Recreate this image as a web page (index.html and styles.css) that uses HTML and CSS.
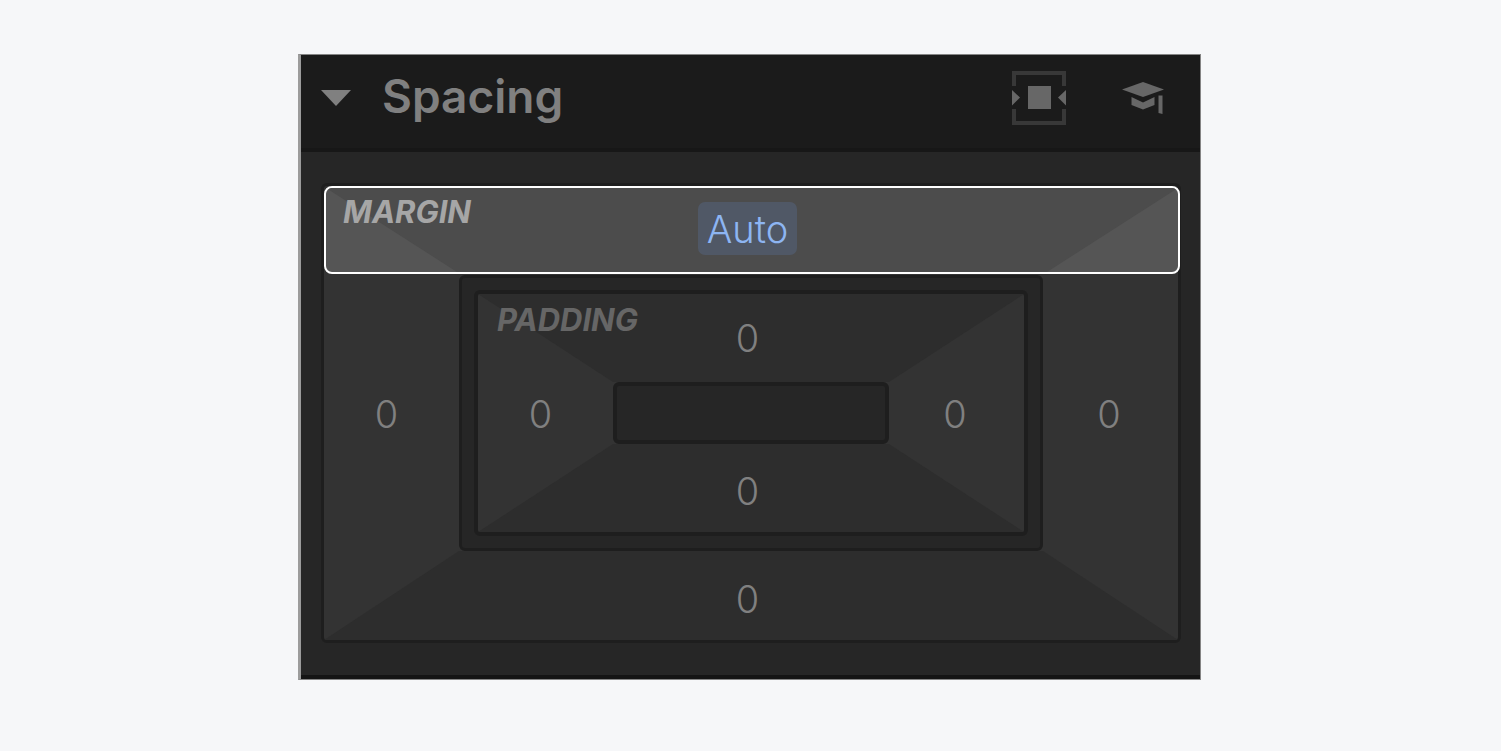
FILE: index.html
```html
<!DOCTYPE html>
<html lang="en">
<head>
  <meta charset="UTF-8" />
  <meta name="viewport" content="width=device-width, initial-scale=1" />
  <title>Spacing</title>
  <link rel="stylesheet" href="styles.css">
</head>
<body>
  <section class="panel">
    <header class="panel-header">
      <h2 class="panel-title">
        <button class="toggle" type="button" aria-expanded="true">
          <svg class="caret" viewBox="0 0 30 16" width="30" height="16" aria-hidden="true">
            <path d="M0 0h30L15 16z" fill="#808080" />
          </svg>
          <span class="toggle-text">Spacing</span>
        </button>
      </h2>
      <div class="actions">
        <button class="icon-button" type="button" aria-label="Center element">
          <svg viewBox="0 0 54 54" width="54" height="54" aria-hidden="true">
            <path d="M2 15V2h50v13M2 38v14h50V38" fill="none" stroke="#383838" stroke-width="4" />
            <path d="M0 19l8 7.500-8 8zM54 19l-8 7.500 8 8z" fill="#676767" />
            <path d="M16 15h23v23H16z" fill="#676767" />
          </svg>
        </button>
        <button class="icon-button" type="button" aria-label="Learn about spacing">
          <svg viewBox="0 0 42 34" width="42" height="34" aria-hidden="true">
            <path d="M0 8.500L21 1l21 7.500L21 16z" fill="#676767" />
            <path d="M9.500 16L21 21.500 32.500 16v8L21 28.500 9.500 24z" fill="#676767" />
            <path d="M36.500 14.500h4v18.500l-4-1z" fill="#676767" />
          </svg>
        </button>
      </div>
    </header>

    <div class="panel-body">
      <div class="box margin-box">
        <span class="box-label">MARGIN</span>
        <button class="side top selected" type="button" aria-label="Margin top"><span class="value">Auto</span></button>
        <button class="side left" type="button" aria-label="Margin left">0</button>
        <div class="inner">
          <div class="box padding-box">
            <span class="box-label">PADDING</span>
            <button class="side top" type="button" aria-label="Padding top">0</button>
            <button class="side left" type="button" aria-label="Padding left">0</button>
            <div class="center"></div>
            <button class="side right" type="button" aria-label="Padding right">0</button>
            <button class="side bottom" type="button" aria-label="Padding bottom">0</button>
          </div>
        </div>
        <button class="side right" type="button" aria-label="Margin right">0</button>
        <button class="side bottom" type="button" aria-label="Margin bottom">0</button>
      </div>
    </div>
  </section>
</body>
</html>
```
FILE: styles.css
```css
* {
  box-sizing: border-box;
}
body {
  margin: 0;
  padding: 54px 2px 54px 0;
  background: #f6f7f9;
  font-family: Inter, sans-serif;
  color: #808080;
}
button {
  font: inherit;
  color: inherit;
  background: none;
  border: none;
  padding: 0;
  cursor: pointer;
}
.panel {
  max-width: 903px;
  margin: 0 auto;
  background: #262626;
  border: 1px solid #858585;
  border-left: 3px solid #9c9c9c;
}
.panel-header {
  display: flex;
  align-items: flex-start;
  justify-content: space-between;
  padding: 16px 36px 23px 20px;
  background: #1b1b1b;
  border-bottom: 4px solid #171717;
}
.panel-title {
  margin: 0;
  font-size: 46px;
  font-weight: 600;
  line-height: 50px;
}
.toggle {
  display: flex;
  align-items: center;
  gap: 31px;
}
.toggle-text {
  padding-bottom: 4px;
}
.actions {
  display: flex;
  align-items: center;
  gap: 56px;
}
.icon-button {
  display: flex;
}
.panel-body {
  padding: 31px 19px 32px 20px;
  border-bottom: 4px solid #141414;
}

/* margin and padding boxes */
.box {
  position: relative;
  display: grid;
  grid-template-columns: 135px 1fr 135px;
  background: #333;
  border-radius: 6px;
}
.margin-box {
  grid-template-rows: 89px auto 89px;
  border: 3px solid #1e1e1e;
}
.padding-box {
  grid-template-rows: 88px 62px 88px;
  border: 4px solid #1e1e1e;
}
.inner {
  padding: 12px;
  background: #262626;
  border: 3px solid #1e1e1e;
  border-radius: 6px;
}
.center {
  background: #262626;
  border: 4px solid #1e1e1e;
  border-radius: 6px;
}
.box-label {
  position: absolute;
  z-index: 1;
  top: 10px;
  left: 19px;
  font-size: 31px;
  font-style: italic;
  font-weight: 700;
  line-height: 32px;
  color: #666;
  pointer-events: none;
}
.margin-box > .box-label {
  color: #a6a6a6;
}
.side {
  display: flex;
  align-items: center;
  justify-content: center;
  font-size: 38px;
  font-weight: 300;
  line-height: 47px;
}
.top,
.bottom {
  grid-column: 1 / -1;
  padding-right: 7px;
  background: #2d2d2d;
}
.top {
  clip-path: polygon(0 0, 100% 0, calc(100% - 135px) 100%, 135px 100%);
}
.bottom {
  padding-top: 7px;
  clip-path: polygon(135px 0, calc(100% - 135px) 0, 100% 100%, 0 100%);
}
.left {
  padding: 3px 10px 0 0;
}
.right {
  padding: 3px 3px 0 0;
}

/* the outline of the selected side runs over the box border */
.selected {
  position: relative;
  margin: 0 -2px 1px 0;
  padding: 0 9px 3px 0;
  clip-path: none;
  overflow: hidden;
  background: #555;
  border: 2px solid #fff;
  border-radius: 8px;
}
.selected::before {
  content: "";
  position: absolute;
  inset: 0;
  background: #4c4c4c;
  clip-path: polygon(0 0, 100% 0, calc(100% - 131px) 100%, 131px 100%);
}
.value {
  position: relative;
  padding: 4px 9px 2px;
  background: #505866;
  border-radius: 7px;
  color: #8db5f2;
}
```
